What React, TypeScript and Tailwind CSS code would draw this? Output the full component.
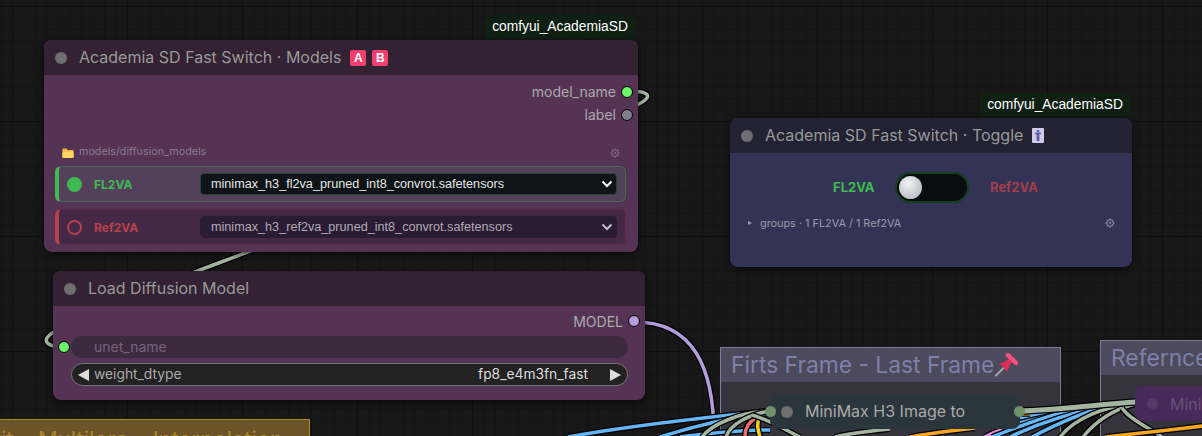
import React from "react";

const WIRES_UNDER: [string, string, number?][] = [
  ["M627 91 C 656 91 652 99 630 108 L 200 270 L 62 328 C 38 338 44 347 64 347", "#a3b5a0"],
  ["M635 322 C 692 322 714 365 714 437", "#b39ddb"],
  ["M770 411 C 720 416 640 424 568 437", "#64b5f6"],
  ["M770 413 C 740 416 700 424 660 437", "#64b5f6"],
  ["M910 437 C 930 433 950 431 975 428", "#f5a623"],
  ["M835 437 C 850 433 870 431 890 429", "#a3b5a0"],
  ["M770 430 C 740 430 700 434 680 437", "#64b5f6"],
  ["M745 437 C 745 428 748 422 756 418", "#ef6f6c"],
  ["M760 416 C 756 424 758 430 760 437", "#f2d21b"],
  ["M770 411 C 740 412 712 424 702 437", "#a3b5a0"],
  ["M770 411 C 750 414 730 424 726 437", "#a3b5a0"],
  ["M752 415 C 770 420 785 430 800 437", "#a3b5a0"],
  ["M985 437 C 990 434 995 432 1002 430", "#e78ad8"],
  ["M1019 418 C 1050 412 1090 406 1120 404", "#64b5f6"],
  ["M1019 423 C 1050 416 1080 408 1110 405", "#64b5f6"],
  ["M1019 430 C 1045 420 1075 411 1105 405", "#64b5f6"],
  ["M992 437 C 1020 426 1050 414 1085 408", "#64b5f6"],
  ["M1010 437 C 1035 425 1065 414 1100 408", "#64b5f6"],
  ["M1032 437 C 1055 425 1085 412 1105 407", "#64b5f6"],
  ["M1060 437 C 1075 418 1105 406 1135 404", "#a3b5a0"],
  ["M1083 437 C 1095 422 1112 410 1135 404", "#a3b5a0"],
  ["M1122 408 C 1130 420 1150 428 1162 437", "#a3b5a0"],
  ["M1105 437 C 1140 433 1170 430 1203 426", "#f5a623"],
  ["M1019 413 L 1030 413", "#f5a623", 5],
  ["M1019 411 C 1060 410 1100 404 1136 402", "#a3b5a0", 5],
];

function Wires() {
  return (
    <svg className="absolute inset-0 h-[436px] w-[1202px]" viewBox="0 0 1202 436" fill="none">
      {WIRES_UNDER.map(([d, c, w], i) => (
        <g key={i}>
          <path d={d} stroke="#000" strokeWidth={(w ?? 3.5) + 2.5} />
          <path d={d} stroke={c} strokeWidth={w ?? 3.5} />
        </g>
      ))}
    </svg>
  );
}

function Gear({ className }: { className: string }) {
  return (
    <svg className={className} viewBox="0 0 12 12" fill="none" stroke="currentColor">
      <circle cx="6" cy="6" r="3.4" strokeWidth="1" />
      <circle cx="6" cy="6" r="0.9" strokeWidth="0.7" />
      <path d="M6 1.4v1.2M6 9.4v1.2M1.4 6h1.2M9.4 6h1.2M2.8 2.8l.8.8M8.4 8.4l.8.8M9.2 2.8l-.8.8M3.6 8.4l-.8.8" strokeWidth="0.9" />
    </svg>
  );
}

function Chevron({ className }: { className: string }) {
  return (
    <svg className={className} viewBox="0 0 12 8" fill="none" stroke="currentColor" strokeWidth="2">
      <path d="M1.5 1.5 6 6l4.5-4.5" />
    </svg>
  );
}

function Keycap({ children }: { children: string }) {
  return (
    <span className="flex h-4 w-4 items-center justify-center rounded-[2px] bg-[#f43f6e] font-['Liberation_Sans',sans-serif] text-[12px] font-bold leading-none text-white">
      {children}
    </span>
  );
}

function Tag({ className }: { className: string }) {
  return (
    <div className={`absolute flex h-[24px] w-[150px] items-center justify-center rounded-t-[6px] bg-[#0f1f12] font-['Liberation_Sans',sans-serif] text-[13.8px] text-white ${className}`}>
      comfyui_AcademiaSD
    </div>
  );
}

function Header({ title, bg, children }: { title: string; bg: string; children?: React.ReactNode }) {
  return (
    <div className={`flex h-[35px] items-center rounded-t-[8px] pl-[11px] ${bg}`}>
      <span className="h-[12px] w-[12px] rounded-full bg-[#6f6f6f]" />
      <span className="mb-[2px] ml-[12px] whitespace-nowrap text-[16px] text-[#999999]">{title}</span>
      {children}
    </div>
  );
}

function ModelRow({ active }: { active: boolean }) {
  return (
    <div
      className={`flex h-[36px] items-center rounded-[6px] border-l-4 pl-[8px] ${
        active
          ? "border border-l-4 border-[#456a4c] border-l-[#3fb950] bg-[#53405a]"
          : "border border-l-4 border-[#5a2c48] border-l-[#b5424c] bg-[#452845]"
      }`}
    >
      {active ? (
        <span className="h-[15px] w-[15px] rounded-full bg-[#3fb950]" />
      ) : (
        <span className="h-[15px] w-[15px] rounded-full border-2 border-[#b5424c]" />
      )}
      <span className={`ml-[12px] w-[106px] pt-[1px] text-[12px] font-bold ${active ? "text-[#3fb950]" : "text-[#b5424c]"}`}>
        {active ? "FL2VA" : "Ref2VA"}
      </span>
      <div
        className={`flex h-[22px] w-[417px] items-center justify-between rounded-[4px] pl-[10px] pr-[3px] font-['Liberation_Sans',sans-serif] text-[12.65px] ${
          active ? "border border-[#1f4a2b] bg-[#0e1418] text-[#e6e6e6]" : "border border-[#2a1c33] bg-[#2a1c33] text-[#b3aab5]"
        }`}
      >
        <span>{active ? "minimax_h3_fl2va_pruned_int8_convrot.safetensors" : "minimax_h3_ref2va_pruned_int8_convrot.safetensors"}</span>
        <Chevron className={`h-[8px] w-[12px] ${active ? "text-white" : "text-[#c4bcc6]"}`} />
      </div>
    </div>
  );
}

function Group({ className, title, header, children }: { className: string; title: string; header: string; children?: React.ReactNode }) {
  return (
    <div className={`absolute overflow-hidden border border-[#7d7a99] bg-[#35343d] ${className}`}>
      <div className={`flex h-[34px] items-center whitespace-nowrap pl-[10px] text-[22.8px] text-[#7f80a8] ${header}`}>
        {title}
        {children}
      </div>
    </div>
  );
}

export default function App() {
  return (
    <div className="relative h-[436px] w-[1202px] overflow-hidden bg-[#171717] font-['Inter',sans-serif] [background-image:linear-gradient(90deg,#0f0f0f_1px,transparent_1px),linear-gradient(#0f0f0f_1px,transparent_1px),linear-gradient(90deg,#131313_1px,transparent_1px),linear-gradient(#131313_1px,transparent_1px)] [background-position:12px_6px,12px_6px,12px_6px,12px_6px] [background-size:115px_115px,115px_115px,11.5px_11.5px,11.5px_11.5px]">
      {/* groups */}
      <Group className="left-[720px] top-[347px] h-[120px] w-[341px]" title="Firts Frame - Last Frame" header="bg-[#4c4a5c]">
        <svg className="h-[24px] w-[24px]" viewBox="0 0 24 24">
          <path d="M1.5 23 10 14.5" stroke="#a8a8b0" strokeWidth="1.8" />
          <path d="M5.5 10.5 13.5 18.5 15.5 12.5 18.5 9 15 5.5 11.5 8.5Z" fill="#dd2e5c" />
          <path d="M14 2 22 10" stroke="#f4527f" strokeWidth="4.5" strokeLinecap="round" />
        </svg>
      </Group>
      <Group className="left-[1100px] top-[340px] h-[120px] w-[140px]" title="Refernce" header="bg-[#4c4a5c]" />
      <div className="absolute left-[-60px] top-[419px] h-[40px] w-[370px] overflow-hidden border border-[#a68a30] bg-[#6b5528]">
        <div className="whitespace-pre pl-[27px] pt-[6px] text-[22px] leading-[26px] text-[#a8842e] [word-spacing:1px]">Split - Multilora - Interpolation</div>
      </div>

      <Wires />

      {/* Model switch */}
      <Tag className="left-[485px] top-[15px]" />
      <div className="absolute left-[44px] top-[40px] h-[212px] w-[594px] rounded-[8px] bg-[#553355] shadow-[0_2px_6px_rgba(0,0,0,0.6)]">
        <Header title="Academia SD Fast Switch · Models" bg="bg-[#332233]">
          <span className="ml-[9px] flex gap-[6px]">
            <Keycap>A</Keycap>
            <Keycap>B</Keycap>
          </span>
        </Header>
        <div className="flex flex-col items-end pr-[5px] pt-[5px] text-[14px] leading-[23px] text-[#aaaaaa]">
          <div className="flex items-center">
            model_name
            <span className="ml-[5px] h-[12px] w-[12px] rounded-full border border-black bg-[#6cf56c]" />
          </div>
          <div className="flex items-center">
            label
            <span className="ml-[5px] h-[12px] w-[12px] rounded-full border border-black bg-[#80808f]" />
          </div>
        </div>
        <div className="mt-[17px] flex h-[16px] items-center justify-between pl-[18px] pr-[17px] pt-[3px] text-[10.75px] text-[#8a7a90]">
          <span className="flex items-center gap-[5px]">
            <svg className="h-[12px] w-[12px]" viewBox="0 0 12 12">
              <path d="M0.5 2.5a1 1 0 0 1 1-1h3l1 1.5h5a1 1 0 0 1 1 1V10a1 1 0 0 1-1 1h-9a1 1 0 0 1-1-1Z" fill="#f4b942" />
              <path d="M0.5 4.5h11V10a1 1 0 0 1-1 1h-9a1 1 0 0 1-1-1Z" fill="#fdd663" />
            </svg>
            models/diffusion_models
          </span>
          <Gear className="h-[12px] w-[12px]" />
        </div>
        <div className="mt-[7px] flex flex-col gap-[7px] pl-[11px] pr-[12px]">
          <ModelRow active />
          <ModelRow active={false} />
        </div>
      </div>

      {/* Toggle */}
      <Tag className="left-[980px] top-[93px]" />
      <div className="absolute left-[730px] top-[118px] h-[149px] w-[402px] rounded-[8px] bg-[#333355] shadow-[0_2px_6px_rgba(0,0,0,0.6)]">
        <Header title="Academia SD Fast Switch · Toggle" bg="bg-[#222233]">
          <svg className="ml-[9px] h-[15px] w-[12px]" viewBox="0 0 12 15">
            <rect width="12" height="15" rx="1" fill="#d2cbe6" />
            <circle cx="6" cy="3" r="1.3" fill="#3a6fc0" />
            <path d="M3 4.6h6v1.6H7.4V13H4.6V6.2H3Z" fill="#5a5fa8" />
          </svg>
        </Header>
        <div className="mt-[19px] flex h-[31px] items-center pl-[103px] text-[13px] font-bold">
          <span className="w-[62px] pt-[1px] text-[#3fb950]">FL2VA</span>
          <div className="flex h-[31px] w-[74px] items-center rounded-full border-2 border-[#12401e] bg-[#080d10] pl-[2px]">
            <span className="h-[23px] w-[23px] rounded-full bg-[radial-gradient(circle_at_40%_35%,#f2f2f5,#a9acb8)]" />
          </div>
          <span className="ml-[21px] pt-[1px] text-[#a33f4b]">Ref2VA</span>
        </div>
        <div className="mt-[12px] flex items-center justify-between pl-[18px] pr-[16px] text-[10.85px] text-[#9a9ab0]">
          <span className="flex items-center gap-[8px]">
            <span className="h-0 w-0 border-y-[2.5px] border-l-[4px] border-y-transparent border-l-[#9a9ab0]" />
            groups · 1 FL2VA / 1 Ref2VA
          </span>
          <Gear className="h-[12px] w-[12px]" />
        </div>
      </div>

      {/* Loader */}
      <div className="absolute left-[53px] top-[271px] h-[129px] w-[592px] rounded-[8px] bg-[#553355] shadow-[0_2px_6px_rgba(0,0,0,0.6)]">
        <Header title="Load Diffusion Model" bg="bg-[#332233]" />
        <div className="flex h-[30px] items-center justify-end pr-[5px] text-[14px] text-[#aaaaaa]">
          MODEL
          <span className="ml-[5px] h-[12px] w-[12px] rounded-full border border-black bg-[#b39ddb]" />
        </div>
        <div className="ml-[18px] mr-[17px] flex h-[22px] items-center rounded-full bg-[#3c2a3f] pb-[1px] pl-[23px] text-[14px] text-[#75647a]">unet_name</div>
        <div className="ml-[18px] mr-[17px] mt-[5px] flex h-[23px] items-center justify-between rounded-full border border-[#777777] bg-[#222222] px-[6px] text-[13.8px] text-[#aaaaaa]">
          <span className="flex items-center gap-[5px]">
            <span className="h-0 w-0 border-y-[6px] border-r-[11px] border-y-transparent border-r-[#dddddd]" />
            weight_dtype
          </span>
          <span className="flex items-center gap-[22px] text-[#dddddd]">
            fp8_e4m3fn_fast
            <span className="h-0 w-0 border-y-[6px] border-l-[11px] border-y-transparent border-l-[#dddddd]" />
          </span>
        </div>
      </div>
      <span className="absolute left-[58px] top-[341px] h-[12px] w-[12px] rounded-full border border-black bg-[#6cf56c]" />

      {/* MiniMax */}
      <div className="absolute left-[770px] top-[394px] flex h-[35px] w-[250px] items-center rounded-[8px] bg-[#2a363b] pl-[11px] text-[16px] text-[#aaaaaa]">
        <span className="h-[12px] w-[12px] rounded-full bg-[#6f6f6f]" />
        <span className="mb-[1px] ml-[12px] whitespace-nowrap">MiniMax H3 Image to</span>
      </div>
      <span className="absolute left-[765px] top-[406px] h-[11px] w-[11px] rounded-full bg-[#6f916b]" />
      <span className="absolute left-[1014px] top-[406px] h-[11px] w-[11px] rounded-full bg-[#6f916b]" />

      <div className="absolute left-[1135px] top-[386px] flex h-[35px] w-[120px] items-center rounded-[8px] bg-[#472a59] pl-[12px] text-[16px] text-[#6a5078]">
        <span className="h-[11px] w-[11px] rounded-full bg-[#553a68]" />
        <span className="ml-[12px]">MiniMax</span>
      </div>
    </div>
  );
}
